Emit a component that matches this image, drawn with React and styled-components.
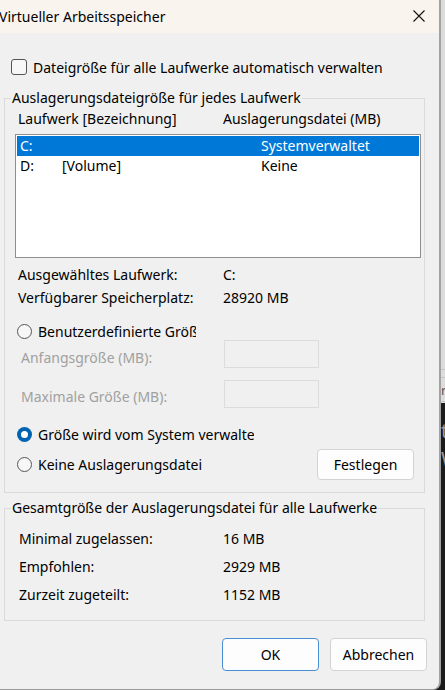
import React from "react";
import styled, { createGlobalStyle } from "styled-components";

const Global = createGlobalStyle`
  html, body { margin: 0; padding: 0; }
  body {
    width: 445px; height: 690px; overflow: hidden;
    background: #1b1b1b;
    font-family: "Noto Sans", "Open Sans", sans-serif;
    font-size: 14px;
    color: #000;
  }
  * { box-sizing: border-box; }
`;

const Screen = styled.div`
  display: flex;
  width: 445px;
  height: 690px;
`;

const Dialog = styled.div`
  width: 441px;
  height: 690px;
  background: #f0f0f0;
  border-right: 2px solid #a2a2a2;
  border-bottom: 1px solid #9a9a9a;
  border-bottom-right-radius: 8px;
  display: flex;
  flex-direction: column;
  overflow: hidden;
  flex-shrink: 0;
`;

const TitleBar = styled.div`
  height: 33px;
  background: #faf4ef;
  display: flex;
  align-items: center;
  justify-content: space-between;
  padding: 0 14px 0 0;
  font-size: 14px;
`;

const TitleText = styled.span`
  margin-left: -1px;
  margin-top: -1px;
`;

const CloseIcon = styled.svg`
  width: 12px;
  height: 12px;
  margin-top: -2px;
`;

const Body = styled.div`
  display: flex;
  flex-direction: column;
`;

const CheckRow = styled.label`
  display: flex;
  align-items: center;
  height: 20px;
  margin-top: 24px;
  padding-left: 11px;
  gap: 6px;
`;

const CheckBox = styled.span`
  width: 16px;
  height: 16px;
  border: 1px solid #555;
  border-radius: 3px;
  background: #f7f7f7;
`;

const Group = styled.fieldset`
  margin: ${(p) => p.$top}px 0 0 4px;
  width: 421px;
  border: 1px solid #dadada;
  padding: 0 0 ${(p) => p.$bottom}px 0;
  display: flex;
  flex-direction: column;
`;

const Legend = styled.legend`
  margin-left: 6px;
  padding: 0 1px;
  line-height: 20px;
  height: 20px;
`;

const Row = styled.div`
  display: flex;
  align-items: center;
  height: 20px;
  line-height: 20px;
  margin-top: ${(p) => p.$top || 0}px;
  padding-left: ${(p) => p.$left || 0}px;
  white-space: nowrap;
`;

const Label = styled.span`
  width: ${(p) => p.$w}px;
  flex-shrink: 0;
`;

const ListBox = styled.div`
  margin: 5px 0 0 10px;
  width: 406px;
  height: 124px;
  border: 1px solid #8e8e8e;
  background: #fff;
  padding: 1px;
`;

const ListRow = styled.div`
  display: grid;
  grid-template-columns: 42px 199px 1fr;
  height: 20px;
  line-height: 20px;
  padding-left: 3px;
  background: ${(p) => (p.$selected ? "#0078d7" : "transparent")};
  color: ${(p) => (p.$selected ? "#fff" : "#000")};
`;

const RadioRow = styled.div`
  display: flex;
  align-items: center;
  height: ${(p) => p.$h || 18}px;
  margin-top: ${(p) => p.$top}px;
  padding-left: 12px;
  justify-content: space-between;
  padding-right: 10px;
`;

const RadioLabel = styled.label`
  display: flex;
  align-items: center;
  gap: 6px;
  white-space: nowrap;
`;

const Radio = styled.span`
  width: 15px;
  height: 15px;
  border-radius: 50%;
  flex-shrink: 0;
  border: ${(p) => (p.$on ? "none" : "1px solid #555")};
  background: ${(p) => (p.$on ? "#0063b1" : "#f7f7f7")};
  display: flex;
  align-items: center;
  justify-content: center;
  &::after {
    content: "";
    display: ${(p) => (p.$on ? "block" : "none")};
    width: 7px;
    height: 7px;
    border-radius: 50%;
    background: #fff;
  }
`;

const Clip = styled.span`
  display: block;
  overflow: hidden;
  width: ${(p) => p.$w}px;
`;

const FieldRow = styled.div`
  display: flex;
  align-items: flex-start;
  height: 28px;
  margin-top: ${(p) => p.$top}px;
  padding-left: 16px;
`;

const DisabledLabel = styled.span`
  width: 203px;
  color: #a0a0a0;
  line-height: 20px;
  padding-top: ${(p) => p.$pt}px;
  white-space: nowrap;
`;

const Input = styled.div`
  width: 95px;
  height: 28px;
  border: 1px solid #dcdcdc;
  background: #f0f0f0;
`;

const Button = styled.button`
  width: 97px;
  height: ${(p) => p.$h || 33}px;
  background: #fdfdfd;
  border: 1px solid ${(p) => (p.$primary ? "#4a8fd4" : "#d3d3d3")};
  border-radius: 4px;
  font-family: inherit;
  font-size: 14px;
  color: #000;
  padding: 0;
`;

const Footer = styled.div`
  display: flex;
  justify-content: flex-end;
  gap: 11px;
  margin-top: 17px;
  padding-right: 12px;
`;

const Strip = styled.div`
  flex: 1;
  display: flex;
  flex-direction: column;
  overflow: hidden;
`;

const StripTop = styled.div`
  height: 403px;
  background: #dcdcdc;
  display: flex;
  flex-direction: column;
`;

const StripLine = styled.div`
  height: ${(p) => p.$h}px;
  border-bottom: 1px solid #c4c4c4;
  font-size: 13px;
  line-height: ${(p) => p.$h}px;
  color: #555;
  overflow: hidden;
`;

const StripBottom = styled.div`
  flex: 1;
  background: #1b1b1b;
  color: #9a9a9a;
  font-size: 20px;
  line-height: 28px;
  padding-top: 14px;
  overflow: hidden;
`;

export default function App() {
  return (
    <>
      <Global />
      <Screen>
        <Dialog>
          <TitleBar>
            <TitleText>Virtueller Arbeitsspeicher</TitleText>
            <CloseIcon viewBox="0 0 12 12">
              <path d="M0.5 0.5 L11.5 11.5 M11.5 0.5 L0.5 11.5" stroke="#111" strokeWidth="1.1" />
            </CloseIcon>
          </TitleBar>
          <Body>
            <CheckRow>
              <CheckBox />
              <span>Dateigröße für alle Laufwerke automatisch verwalten</span>
            </CheckRow>

            <Group $top={11} $bottom={12}>
              <Legend>Auslagerungsdateigröße für jedes Laufwerk</Legend>
              <Row $top={1} $left={13}>
                <Label $w={205}>Laufwerk [Bezeichnung]</Label>
                <span>Auslagerungsdatei (MB)</span>
              </Row>
              <ListBox>
                <ListRow $selected>
                  <span>C:</span>
                  <span />
                  <span>Systemverwaltet</span>
                </ListRow>
                <ListRow>
                  <span>D:</span>
                  <span>[Volume]</span>
                  <span>Keine</span>
                </ListRow>
              </ListBox>
              <Row $top={7} $left={13}>
                <Label $w={205}>Ausgewähltes Laufwerk:</Label>
                <span>C:</span>
              </Row>
              <Row $top={3} $left={13}>
                <Label $w={205}>Verfügbarer Speicherplatz:</Label>
                <span>28920 MB</span>
              </Row>
              <RadioRow $top={14}>
                <RadioLabel>
                  <Radio />
                  <Clip $w={158}>Benutzerdefinierte Größe</Clip>
                </RadioLabel>
              </RadioRow>
              <FieldRow $top={0}>
                <DisabledLabel $pt={8}>Anfangsgröße (MB):</DisabledLabel>
                <Input />
              </FieldRow>
              <FieldRow $top={12}>
                <DisabledLabel $pt={7}>Maximale Größe (MB):</DisabledLabel>
                <Input />
              </FieldRow>
              <RadioRow $top={17}>
                <RadioLabel>
                  <Radio $on />
                  <Clip $w={216}>Größe wird vom System verwaltet</Clip>
                </RadioLabel>
              </RadioRow>
              <RadioRow $top={6} $h={31}>
                <RadioLabel>
                  <Radio />
                  <span>Keine Auslagerungsdatei</span>
                </RadioLabel>
                <Button $h={31}>Festlegen</Button>
              </RadioRow>
            </Group>

            <Group $top={5} $bottom={15}>
              <Legend>Gesamtgröße der Auslagerungsdatei für alle Laufwerke</Legend>
              <Row $top={11} $left={14}>
                <Label $w={204}>Minimal zugelassen:</Label>
                <span>16 MB</span>
              </Row>
              <Row $top={8} $left={14}>
                <Label $w={204}>Empfohlen:</Label>
                <span>2929 MB</span>
              </Row>
              <Row $top={8} $left={14}>
                <Label $w={204}>Zurzeit zugeteilt:</Label>
                <span>1152 MB</span>
              </Row>
            </Group>

            <Footer>
              <Button $primary>OK</Button>
              <Button>Abbrechen</Button>
            </Footer>
          </Body>
        </Dialog>
        <Strip>
          <StripTop>
            <StripLine $h={370} />
            <StripLine $h={8} />
            <StripLine $h={24}>r</StripLine>
          </StripTop>
          <StripBottom>
            t<br />W
          </StripBottom>
        </Strip>
      </Screen>
    </>
  );
}
